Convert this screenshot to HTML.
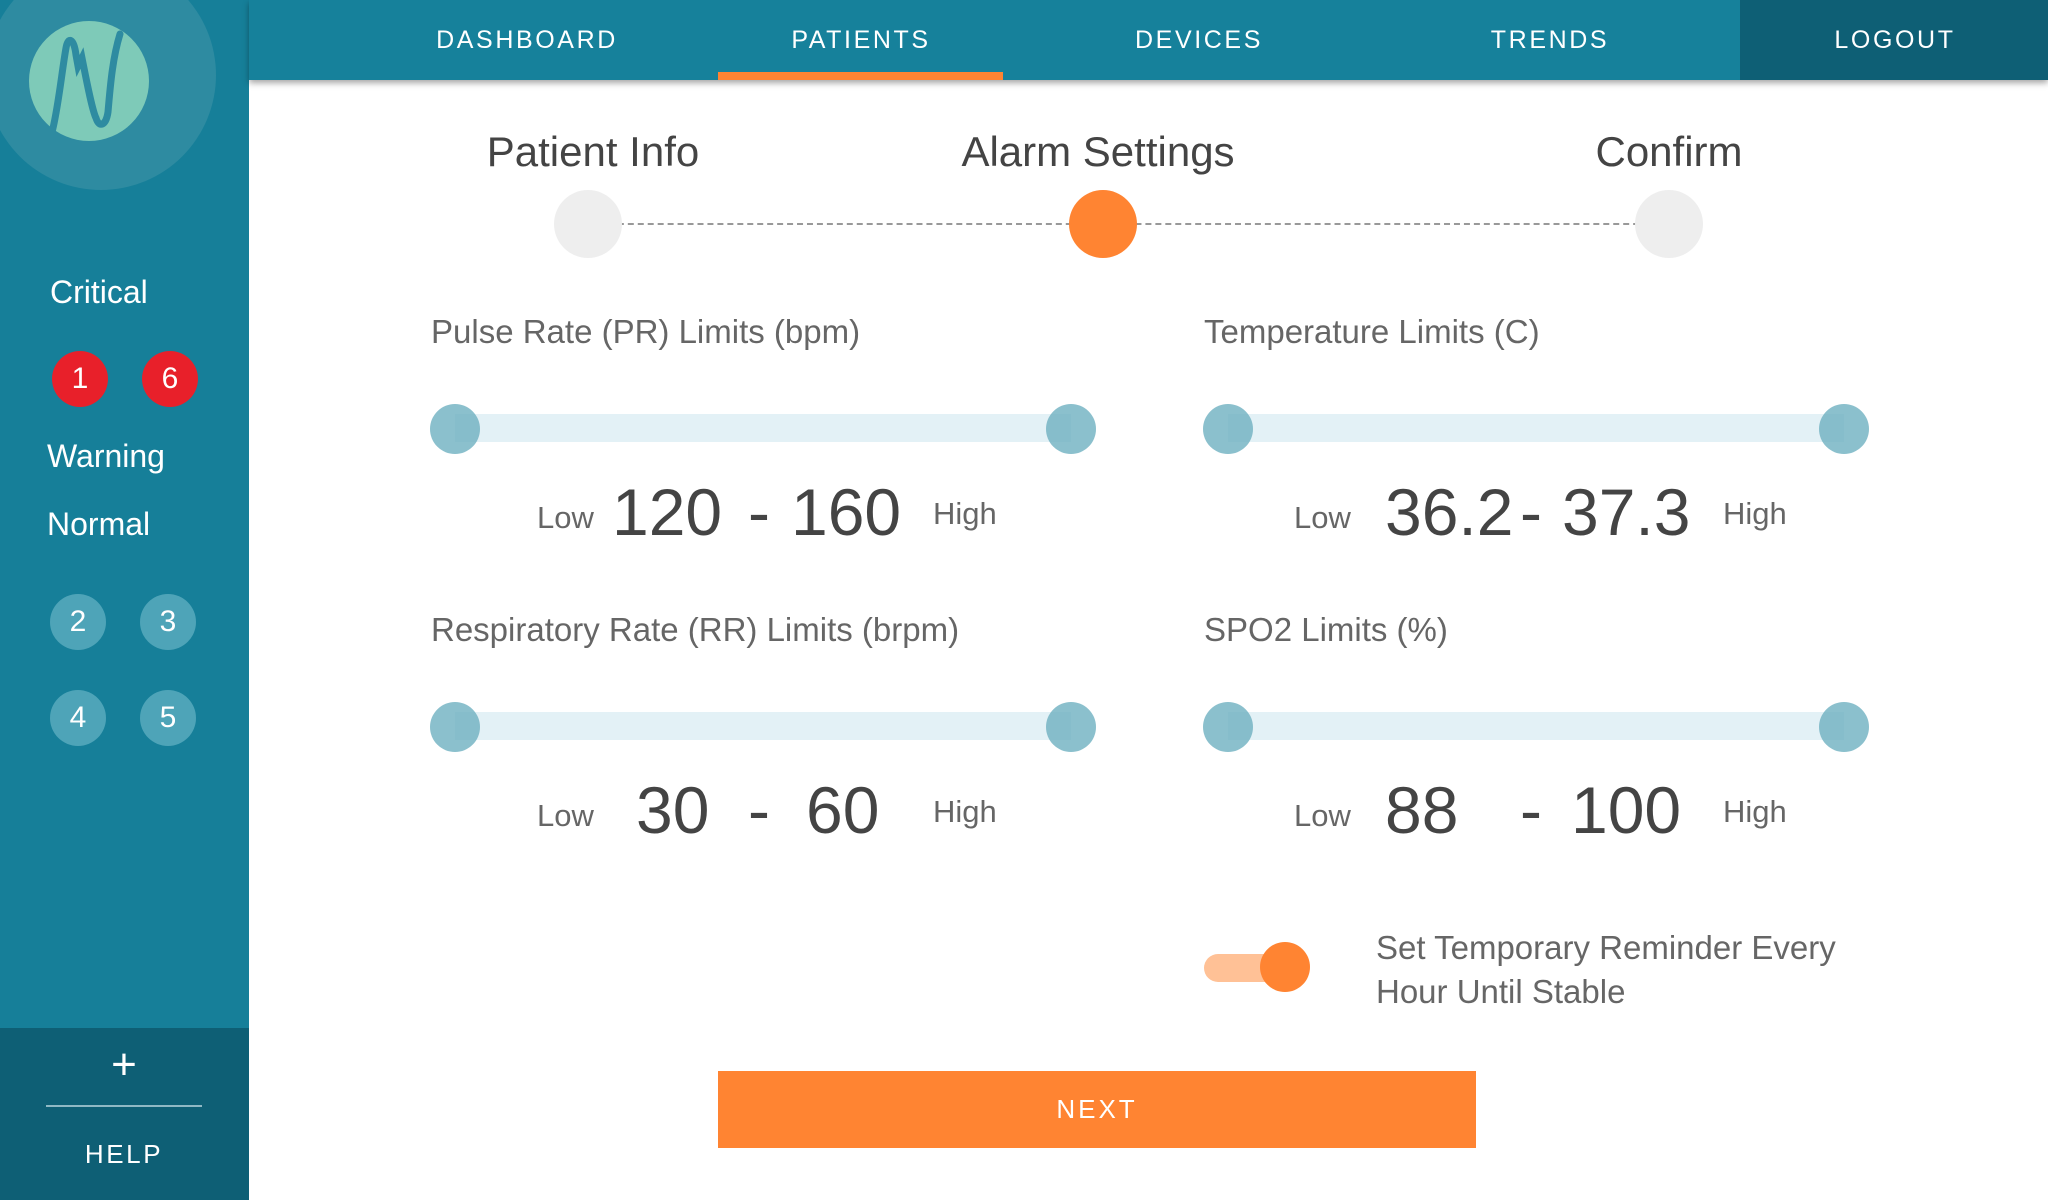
<!DOCTYPE html>
<html><head><meta charset="utf-8"><style>
*{margin:0;padding:0;box-sizing:border-box}
body{width:2048px;height:1200px;overflow:hidden;background:#fff;font-family:"Liberation Sans","DejaVu Sans",sans-serif;position:relative}
.a{position:absolute;white-space:nowrap}
.c{transform:translateX(-50%)}
.nav{color:#fff;font-size:25px;letter-spacing:2.6px;top:26px}
.step{font-size:42px;color:#444;top:128px}
.lbl{font-size:33px;color:#666}
.track{position:absolute;height:28px;background:#e3f1f6}
.th{position:absolute;width:50px;height:50px;border-radius:50%;background:rgba(110,176,192,.8)}
.low{font-size:31px;color:#666}
.big{font-size:66px;color:#444}
.sb{color:#fff;font-size:32px}
.bd{position:absolute;width:56px;height:56px;border-radius:50%;color:#fff;font-size:30px;text-align:center;line-height:56px}
</style></head><body>
<div class="a" style="left:0;top:0;width:249px;height:1200px;background:#167f99"></div>
<div class="a" style="left:-14px;top:-40px;width:230px;height:230px;border-radius:50%;background:#2e8ba1"></div>
<svg class="a" style="left:0;top:0" width="249" height="160">
<circle cx="89" cy="81" r="60" fill="#7ecab8"/>
<path d="M52 132 C58 110 62 70 66 48 C68 36 74 38 76 55 L78 66 L82 58 C86 78 92 110 96 118 C99 128 106 126 108 112 C110 90 112 60 120 34" stroke="#2e8ba1" stroke-width="7" fill="none" stroke-linecap="round"/>
</svg>
<div class="a sb" style="left:50px;top:274px">Critical</div>
<div class="bd" style="left:52px;top:351px;background:#e8202a">1</div>
<div class="bd" style="left:142px;top:351px;background:#e8202a">6</div>
<div class="a sb" style="left:47px;top:438px">Warning</div>
<div class="a sb" style="left:47px;top:506px">Normal</div>
<div class="bd" style="left:50px;top:594px;background:#4ea4b8">2</div>
<div class="bd" style="left:140px;top:594px;background:#4ea4b8">3</div>
<div class="bd" style="left:50px;top:690px;background:#4ea4b8">4</div>
<div class="bd" style="left:140px;top:690px;background:#4ea4b8">5</div>
<div class="a" style="left:0;top:1028px;width:249px;height:172px;background:#0e5f75"></div>
<div class="a c" style="left:124px;top:1040px;color:#fff;font-size:44px">+</div>
<div class="a" style="left:46px;top:1105px;width:156px;height:2px;background:#8fb9c5"></div>
<div class="a c nav" style="left:124px;top:1139px;font-size:26px">HELP</div>
<div class="a" style="left:249px;top:0;width:1799px;height:80px;background:#16819b;box-shadow:0 3px 6px rgba(0,0,0,.35)"></div>
<div class="a" style="left:1740px;top:0;width:308px;height:80px;background:#0e5f75"></div>
<div class="a" style="left:718px;top:72px;width:285px;height:8px;background:#ff8432"></div>
<div class="a c nav" style="left:527px">DASHBOARD</div>
<div class="a c nav" style="left:861px">PATIENTS</div>
<div class="a c nav" style="left:1199px">DEVICES</div>
<div class="a c nav" style="left:1550px">TRENDS</div>
<div class="a c nav" style="left:1895px">LOGOUT</div>
<div class="a c step" style="left:593px">Patient Info</div>
<div class="a c step" style="left:1098px">Alarm Settings</div>
<div class="a c step" style="left:1669px">Confirm</div>
<div class="a" style="left:588px;top:223px;width:1081px;border-top:2px dashed #999"></div>
<div class="a" style="left:554px;top:190px;width:68px;height:68px;border-radius:50%;background:#eee"></div>
<div class="a" style="left:1069px;top:190px;width:68px;height:68px;border-radius:50%;background:#ff8432"></div>
<div class="a" style="left:1635px;top:190px;width:68px;height:68px;border-radius:50%;background:#eee"></div>
<div class="a lbl" style="left:431px;top:313px">Pulse Rate (PR) Limits (bpm)</div>
<div class="a lbl" style="left:1204px;top:313px">Temperature Limits (C)</div>
<div class="track" style="left:455px;top:414px;width:616px"></div>
<div class="th" style="left:430px;top:404px"></div><div class="th" style="left:1046px;top:404px"></div>
<div class="track" style="left:1228px;top:414px;width:616px"></div>
<div class="th" style="left:1203px;top:404px"></div><div class="th" style="left:1819px;top:404px"></div>
<div class="a low" style="left:537px;top:500px">Low</div>
<div class="a big" style="left:612px;top:474px">120</div>
<div class="a big" style="left:748px;top:474px">-</div>
<div class="a big" style="left:791px;top:474px">160</div>
<div class="a low" style="left:933px;top:496px">High</div>
<div class="a low" style="left:1294px;top:500px">Low</div>
<div class="a big" style="left:1385px;top:474px">36.2</div>
<div class="a big" style="left:1520px;top:474px">-</div>
<div class="a big" style="left:1562px;top:474px">37.3</div>
<div class="a low" style="left:1723px;top:496px">High</div>
<div class="a lbl" style="left:431px;top:611px">Respiratory Rate (RR) Limits (brpm)</div>
<div class="a lbl" style="left:1204px;top:611px">SPO2 Limits (%)</div>
<div class="track" style="left:455px;top:712px;width:616px"></div>
<div class="th" style="left:430px;top:702px"></div><div class="th" style="left:1046px;top:702px"></div>
<div class="track" style="left:1228px;top:712px;width:616px"></div>
<div class="th" style="left:1203px;top:702px"></div><div class="th" style="left:1819px;top:702px"></div>
<div class="a low" style="left:537px;top:798px">Low</div>
<div class="a big" style="left:636px;top:772px">30</div>
<div class="a big" style="left:748px;top:772px">-</div>
<div class="a big" style="left:806px;top:772px">60</div>
<div class="a low" style="left:933px;top:794px">High</div>
<div class="a low" style="left:1294px;top:798px">Low</div>
<div class="a big" style="left:1385px;top:772px">88</div>
<div class="a big" style="left:1520px;top:772px">-</div>
<div class="a big" style="left:1571px;top:772px">100</div>
<div class="a low" style="left:1723px;top:794px">High</div>
<div class="a" style="left:1204px;top:954px;width:80px;height:28px;border-radius:14px;background:#ffc196"></div>
<div class="a" style="left:1260px;top:942px;width:50px;height:50px;border-radius:50%;background:#ff8432"></div>
<div class="a lbl" style="left:1376px;top:926px;line-height:44px;white-space:normal;width:500px">Set Temporary Reminder Every Hour Until Stable</div>
<div class="a" style="left:718px;top:1071px;width:758px;height:77px;background:#ff8432;color:#fff;font-size:26px;letter-spacing:3px;text-align:center;line-height:77px">NEXT</div>
</body></html>
